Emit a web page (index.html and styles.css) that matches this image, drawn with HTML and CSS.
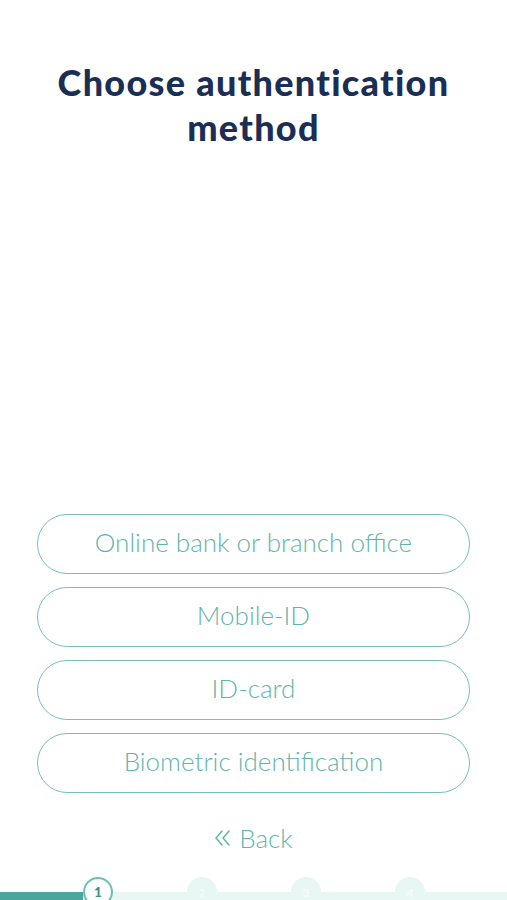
FILE: index.html
```html
<!DOCTYPE html>
<html lang="en">
<head>
  <meta charset="UTF-8" />
  <meta name="viewport" content="width=device-width, initial-scale=1.0"/>
  <title>Choose authentication method</title>
  <link rel="stylesheet" href="styles.css">
</head>
<body>
  <div class="page">
    <h1 class="title">Choose authentication method</h1>

    <div class="methods">
      <button class="method">Online bank or branch office</button>
      <button class="method">Mobile-ID</button>
      <button class="method">ID-card</button>
      <button class="method">Biometric identification</button>
    </div>

    <a class="back" href="#">
      <svg class="back-icon" width="18" height="18" viewBox="0 0 18 18" fill="none" stroke="currentColor" stroke-width="1.5" stroke-linecap="round" stroke-linejoin="round">
        <polyline points="8,2 2,9 8,16" />
        <polyline points="15,2 9,9 15,16" />
      </svg>
      Back
    </a>

    <div class="stepper">
      <span class="step active">1</span>
      <span class="step">2</span>
      <span class="step">3</span>
      <span class="step">4</span>
    </div>
  </div>
</body>
</html>
```

FILE: styles.css
```css
body {
  margin: 0;
  font-family: 'Lato', 'Noto Sans', sans-serif;
  background: #fff;
}

.page {
  height: 900px;
  display: flex;
  flex-direction: column;
  overflow: hidden;
}

.title {
  margin: 60px 40px 0;
  text-align: center;
  color: #1b2f55;
  font-size: 36px;
  font-weight: 900;
  line-height: 45px;
  letter-spacing: 1.3px;
}

.methods {
  margin-top: auto;
  padding: 0 37px;
  display: flex;
  flex-direction: column;
  gap: 13px;
}

.method {
  height: 60px;
  padding: 0 0 4px;
  border: 1.5px solid #74c2b9;
  border-radius: 30px;
  background: #fff;
  color: #5fb5ab;
  font-family: inherit;
  font-size: 26px;
  font-weight: 300;
  cursor: pointer;
}

.back {
  margin: 32px auto 0;
  display: flex;
  align-items: center;
  gap: 7px;
  color: #5fb5ab;
  font-size: 26px;
  font-weight: 300;
  line-height: 26px;
  text-decoration: none;
}

.back-icon {
  width: 18px;
  height: 18px;
}

.stepper {
  margin-top: 26px;
  height: 23px;
  padding-left: 83px;
  display: flex;
  gap: 74px;
  background:
    linear-gradient(to right, #4ba79e 83px, #e8f6f4 83px) bottom / 100% 8px no-repeat;
}

.step {
  width: 30px;
  height: 30px;
  flex: none;
  box-sizing: border-box;
  border-radius: 50%;
  background: #e8f6f4;
  color: #f6fcfb;
  font-size: 12px;
  font-weight: 700;
  display: flex;
  align-items: center;
  justify-content: center;
}

.step.active {
  background: #fff;
  border: 2px solid #6bbfb5;
  color: #3e8f88;
  font-size: 13px;
  font-weight: 900;
}
```
